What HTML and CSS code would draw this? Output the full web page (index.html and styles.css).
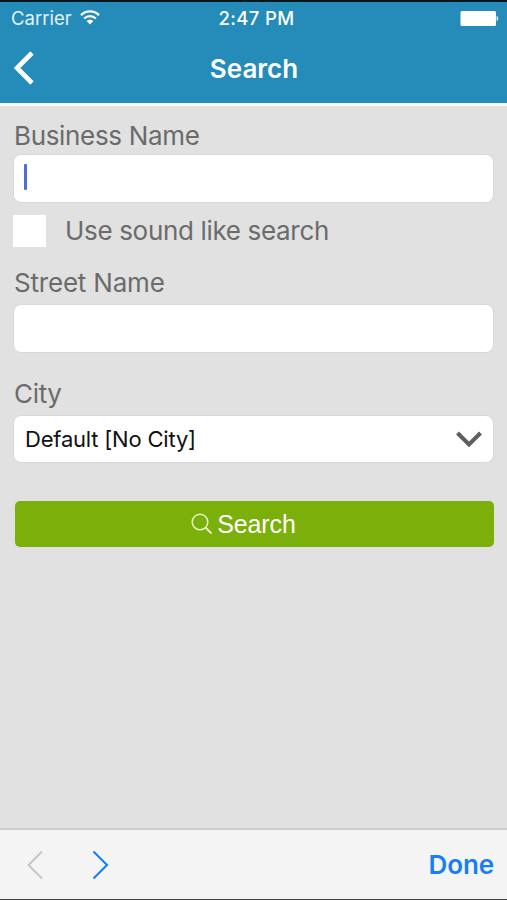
FILE: index.html
```html
<!DOCTYPE html>
<html lang="en">
<head>
    <meta charset="UTF-8">
    <meta name="viewport" content="width=device-width, initial-scale=1.0">
    <title>Search</title>
    <link rel="stylesheet" href="styles.css">
</head>
<body>
    <header class="header">
        <div class="status-bar">
            <div class="carrier">
                <span class="carrier-name">Carrier</span>
                <svg class="wifi" width="20" height="16" viewBox="0 0 20 16" fill="none" stroke="#fff" stroke-width="2.3">
                    <path d="M1 5.1C6 0 14 0 19 5.1"/>
                    <path d="M4.2 8.5C7.4 5.3 12.6 5.3 15.8 8.5"/>
                    <path d="M10 14.5L6.6 11C8.5 9.2 11.5 9.2 13.4 11Z" fill="#fff" stroke="none"/>
                </svg>
            </div>
            <span class="time">2:47 PM</span>
            <svg class="battery" width="39" height="15" viewBox="0 0 39 15" fill="#fff">
                <rect x="0.5" y="0" width="35.5" height="15" rx="1.5"/>
                <path d="M36.6 5C38.8 5.5 38.8 9.5 36.6 10Z"/>
            </svg>
        </div>
        <div class="nav-bar">
            <svg class="back" width="22" height="34" viewBox="0 0 22 34" fill="none" stroke="#fff" stroke-width="4.6">
                <path d="M19 2L4 17L19 32"/>
            </svg>
            <h1>Search</h1>
        </div>
    </header>

    <form class="form">
        <label class="label business" for="business">Business Name</label>
        <div class="field" id="business"><span class="caret"></span></div>

        <div class="check-row">
            <span class="checkbox"></span>
            <span class="label sound">Use sound like search</span>
        </div>

        <label class="label street" for="street">Street Name</label>
        <div class="field" id="street"></div>

        <label class="label city" for="city">City</label>
        <div class="field select" id="city">
            <span class="select-value">Default [No City]</span>
            <svg width="26" height="17" viewBox="0 0 26 17" fill="none" stroke="#5d5e60" stroke-width="4">
                <path d="M1.5 2L13 13.5L24.5 2"/>
            </svg>
        </div>

        <button class="search-btn" type="button">
            <svg width="22" height="22" viewBox="0 0 22 22" fill="none" stroke="#e6f5c8" stroke-width="1.5">
                <circle cx="9" cy="9" r="7.8"/>
                <path d="M14.6 14.6L20.5 20.5" stroke-width="2"/>
            </svg>
            <span class="search-text">Search</span>
        </button>
    </form>

    <footer class="toolbar">
        <svg width="16" height="30" viewBox="0 0 16 30" fill="none" stroke="#c4c4c4" stroke-width="1.9">
            <path d="M15 1.5L1.5 15L15 28.5"/>
        </svg>
        <svg class="next" width="17" height="30" viewBox="0 0 17 30" fill="none" stroke="#147efb" stroke-width="2.1">
            <path d="M1.5 1.5L15 15L1.5 28.5"/>
        </svg>
        <span class="done">Done</span>
    </footer>
</body>
</html>
```
FILE: styles.css
```css
* {
    box-sizing: border-box;
}
body {
    display: flex;
    flex-direction: column;
    height: 900px;
    margin: 0;
    background: #e1e1e1;
    font-family: Inter, "Liberation Sans", sans-serif;
    overflow: hidden;
}
.header {
    height: 106px;
    background: #258bb8;
    border-top: 2px solid #07151c;
    border-bottom: 3px solid #fdfdfd;
    color: #fff;
}
.status-bar {
    display: grid;
    grid-template-columns: 1fr auto 1fr;
    align-items: center;
    height: 32px;
    padding: 0 8px 0 11px;
    font-size: 18.5px;
}
.carrier {
    display: flex;
    align-items: center;
    gap: 8px;
    color: #e4f3fa;
}
.time {
    padding-left: 3px;
    font-weight: 500;
    letter-spacing: 0.4px;
}
.battery {
    justify-self: end;
}
.nav-bar {
    display: grid;
    grid-template-columns: 40px 1fr 40px;
    align-items: center;
    height: 68px;
    padding: 0 10px 0 13px;
}
h1 {
    margin: 0;
    padding-right: 2px;
    font-size: 26px;
    font-weight: 600;
    text-align: center;
}
.form {
    flex: 1;
    padding: 10px 13px 0;
}
.label {
    display: block;
    padding-left: 1px;
    color: #6b6b6b;
    font-size: 26px;
    letter-spacing: -0.33px;
}
.business {
    height: 38px;
    line-height: 40px;
}
.field {
    display: flex;
    align-items: center;
    height: 49px;
    padding: 0 11px;
    background: #fff;
    border: 1px solid #d8d8d8;
    border-radius: 8px;
}
.caret {
    width: 3px;
    height: 26px;
    margin: 0 0 4px -1px;
    border-radius: 1px;
    background: #4a6fdc;
}
.check-row {
    display: flex;
    align-items: center;
    height: 56px;
    gap: 18px;
}
.sound {
    margin-bottom: 2px;
}
.checkbox {
    width: 33px;
    height: 32px;
    background: #fff;
}
.street {
    height: 45px;
    line-height: 47px;
    letter-spacing: -0.2px;
}
.city {
    height: 62px;
    padding-top: 19px;
    line-height: 43px;
}
.select {
    height: 48px;
    justify-content: space-between;
}
.select-value {
    color: #111;
    font-size: 22px;
    letter-spacing: -0.2px;
}
.search-btn {
    display: flex;
    align-items: center;
    justify-content: center;
    gap: 4px;
    width: 479px;
    height: 46px;
    margin: 38px 0 0 2px;
    padding: 0 22px 0 0;
    background: #7baf0a;
    border: none;
    border-radius: 5px;
    color: #fff;
    font-family: "Liberation Sans", sans-serif;
    font-size: 25px;
    letter-spacing: -0.1px;
}
.toolbar {
    display: flex;
    align-items: center;
    height: 72px;
    padding: 0 13px 0 27px;
    background: #f4f4f4;
    border-top: 2px solid #cbcbcb;
    border-bottom: 1px solid #444;
}
.next {
    margin-left: 49px;
}
.done {
    margin-left: auto;
    color: #147efb;
    font-size: 26px;
    font-weight: 600;
    letter-spacing: -0.1px;
}
```
